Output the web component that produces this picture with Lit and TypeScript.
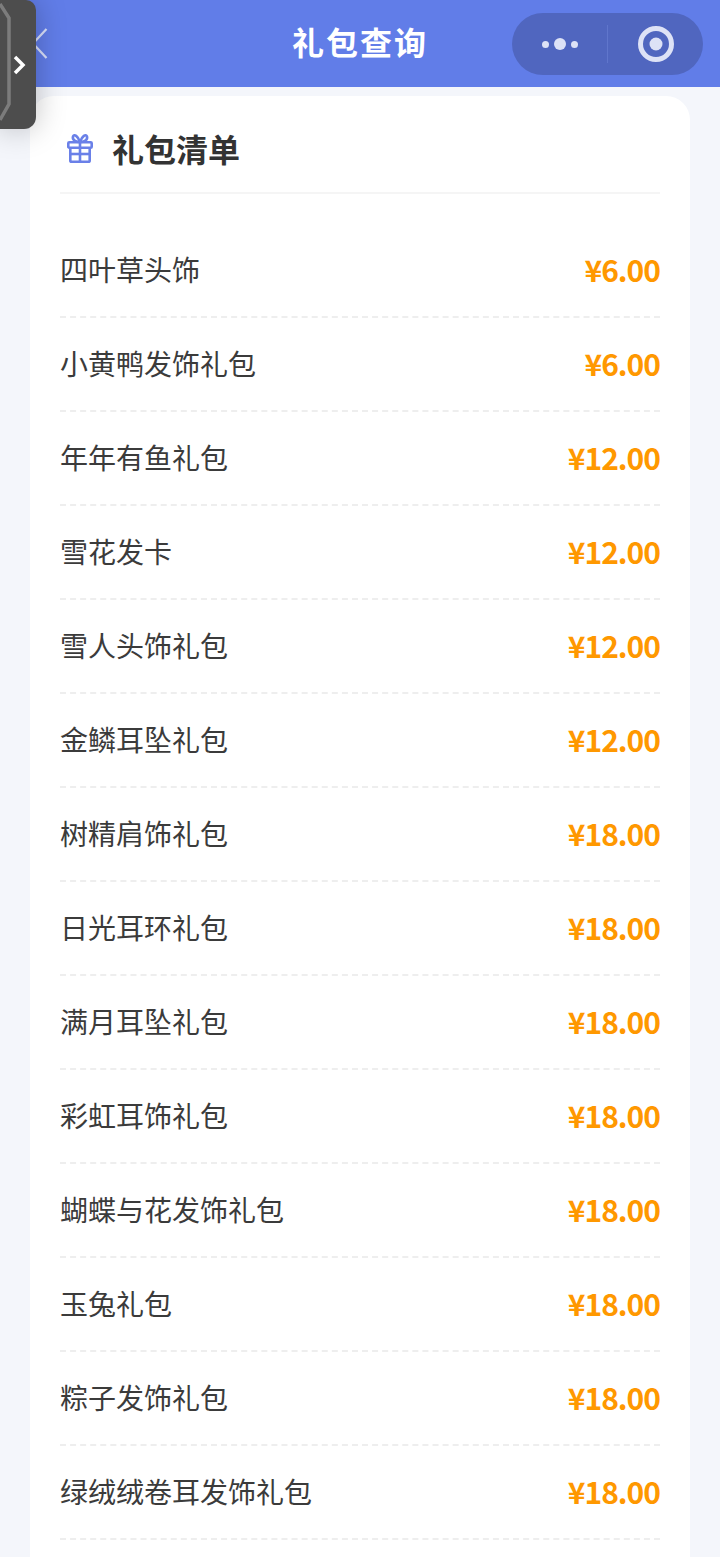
import { LitElement, html, css } from "lit";
import { customElement } from "lit/decorators.js";

const rows: [string, string][] = [
  ["四叶草头饰", "¥6.00"],
  ["小黄鸭发饰礼包", "¥6.00"],
  ["年年有鱼礼包", "¥12.00"],
  ["雪花发卡", "¥12.00"],
  ["雪人头饰礼包", "¥12.00"],
  ["金鳞耳坠礼包", "¥12.00"],
  ["树精肩饰礼包", "¥18.00"],
  ["日光耳环礼包", "¥18.00"],
  ["满月耳坠礼包", "¥18.00"],
  ["彩虹耳饰礼包", "¥18.00"],
  ["蝴蝶与花发饰礼包", "¥18.00"],
  ["玉兔礼包", "¥18.00"],
  ["粽子发饰礼包", "¥18.00"],
  ["绿绒绒卷耳发饰礼包", "¥18.00"],
  ["", ""],
];

@customElement("app-root")
export class AppRoot extends LitElement {
  static styles = css`
    :host {
      display: block;
      width: 720px;
      height: 1557px;
      overflow: hidden;
      position: relative;
      background: #f4f6fb;
      font-family: "Noto Sans CJK SC", "Noto Sans", sans-serif;
    }
    .nav {
      height: 87px;
      box-sizing: border-box;
      padding-bottom: 6px;
      background: #617de8;
      display: flex;
      align-items: center;
      justify-content: center;
      position: relative;
    }
    .nav-title {
      color: #fff;
      font-size: 32px;
      font-weight: 700;
      line-height: 46px;
      letter-spacing: 2px;
    }
    .back {
      position: absolute;
      left: 30px;
      top: 26px;
    }
    .capsule {
      position: absolute;
      left: 512px;
      top: 13px;
      width: 191px;
      height: 62px;
      border-radius: 31px;
      background: #5066bf;
      display: flex;
      align-items: center;
    }
    .cap-left {
      width: 95px;
      display: flex;
      justify-content: center;
      align-items: center;
      gap: 5px;
    }
    .dot { width: 7px; height: 7px; border-radius: 50%; background: #dde2f6; }
    .dot.big { width: 12px; height: 12px; }
    .cap-div { width: 1px; height: 38px; background: #6076cc; }
    .cap-right { flex: 1; display: flex; justify-content: center; align-items: center; }
    .card {
      margin: 9px 30px 0;
      background: #fff;
      border-radius: 24px;
      padding: 0 30px;
    }
    .head {
      height: 98px;
      box-sizing: border-box;
      padding-top: 8px;
      border-bottom: 2px solid #f5f5f5;
      display: flex;
      align-items: center;
      padding-left: 5px;
    }
    .head svg { margin-right: 18px; flex: none; }
    .head-title {
      font-size: 32px;
      font-weight: 700;
      color: #333;
    }
    .list { padding-top: 30px; }
    .row {
      height: 94px;
      box-sizing: border-box;
      border-bottom: 2px dashed #eeeeee;
      display: flex;
      justify-content: space-between;
      align-items: center;
    }
    .name {
      font-size: 28px;
      color: #3b3b3b;
      font-weight: 400;
      position: relative;
      top: -1px;
    }
    .price {
      font-size: 30px;
      color: #ff9800;
      font-weight: 700;
      font-variant-numeric: proportional-nums;
      letter-spacing: -1px;
      position: relative;
      top: -1px;
    }
    .float {
      position: absolute;
      left: 0;
      top: 0;
      width: 36px;
      height: 129px;
      background: #4d4d4d;
      border-radius: 0 10px 12px 0;
      box-shadow: 0 0 30px rgba(0, 0, 0, 0.25);
      overflow: hidden;
    }
    .float svg { position: absolute; left: 0; top: 0; }
  `;

  render() {
    return html`
      <div class="nav">
        <svg class="back" width="20" height="34" viewBox="0 0 20 34">
          <path d="M16.500 3 L3 17.500 L16.500 32" fill="none" stroke="#d9e0fa" stroke-width="2.2" />
        </svg>
        <div class="nav-title">礼包查询</div>
        <div class="capsule">
          <div class="cap-left">
            <span class="dot"></span><span class="dot big"></span><span class="dot"></span>
          </div>
          <div class="cap-div"></div>
          <div class="cap-right">
            <svg width="36" height="36" viewBox="0 0 36 36">
              <circle cx="18" cy="18" r="15.500" fill="none" stroke="#dde2f6" stroke-width="5" />
              <circle cx="18" cy="18" r="6.500" fill="#dde2f6" />
            </svg>
          </div>
        </div>
      </div>
      <div class="card">
        <div class="head">
          <svg width="29" height="32" viewBox="0 0 29 32" fill="none" stroke="#6a80e8" stroke-width="2.6">
            <rect x="3.300" y="10.300" width="23.400" height="5.400" rx="1" />
            <path d="M5.300 15.700 V28.500 a1.300 1.300 0 0 0 1.300 1.300 H23.400 a1.300 1.300 0 0 0 1.300 -1.300 V15.700" />
            <path d="M15 10 V30" />
            <path d="M5.300 22 H24.700" />
            <path d="M15 10 C13 4 9 1.500 8 4.500 C7 8 11 10 15 10 C19 10 23 8 22 4.500 C21 1.500 17 4 15 10" />
          </svg>
          <div class="head-title">礼包清单</div>
        </div>
        <div class="list">
          ${rows.map(
            ([n, p]) => html`<div class="row"><span class="name">${n}</span><span class="price">${p}</span></div>`
          )}
        </div>
      </div>
      <div class="float">
        <svg width="36" height="129" viewBox="0 0 36 129">
          <path d="M0 4 L9 18 V104 L0 120" fill="none" stroke="#7c7c7c" stroke-width="3.500" />
          <path d="M15 57 L23 65 L15 73" fill="none" stroke="#fff" stroke-width="3.500" />
        </svg>
      </div>
    `;
  }
}
